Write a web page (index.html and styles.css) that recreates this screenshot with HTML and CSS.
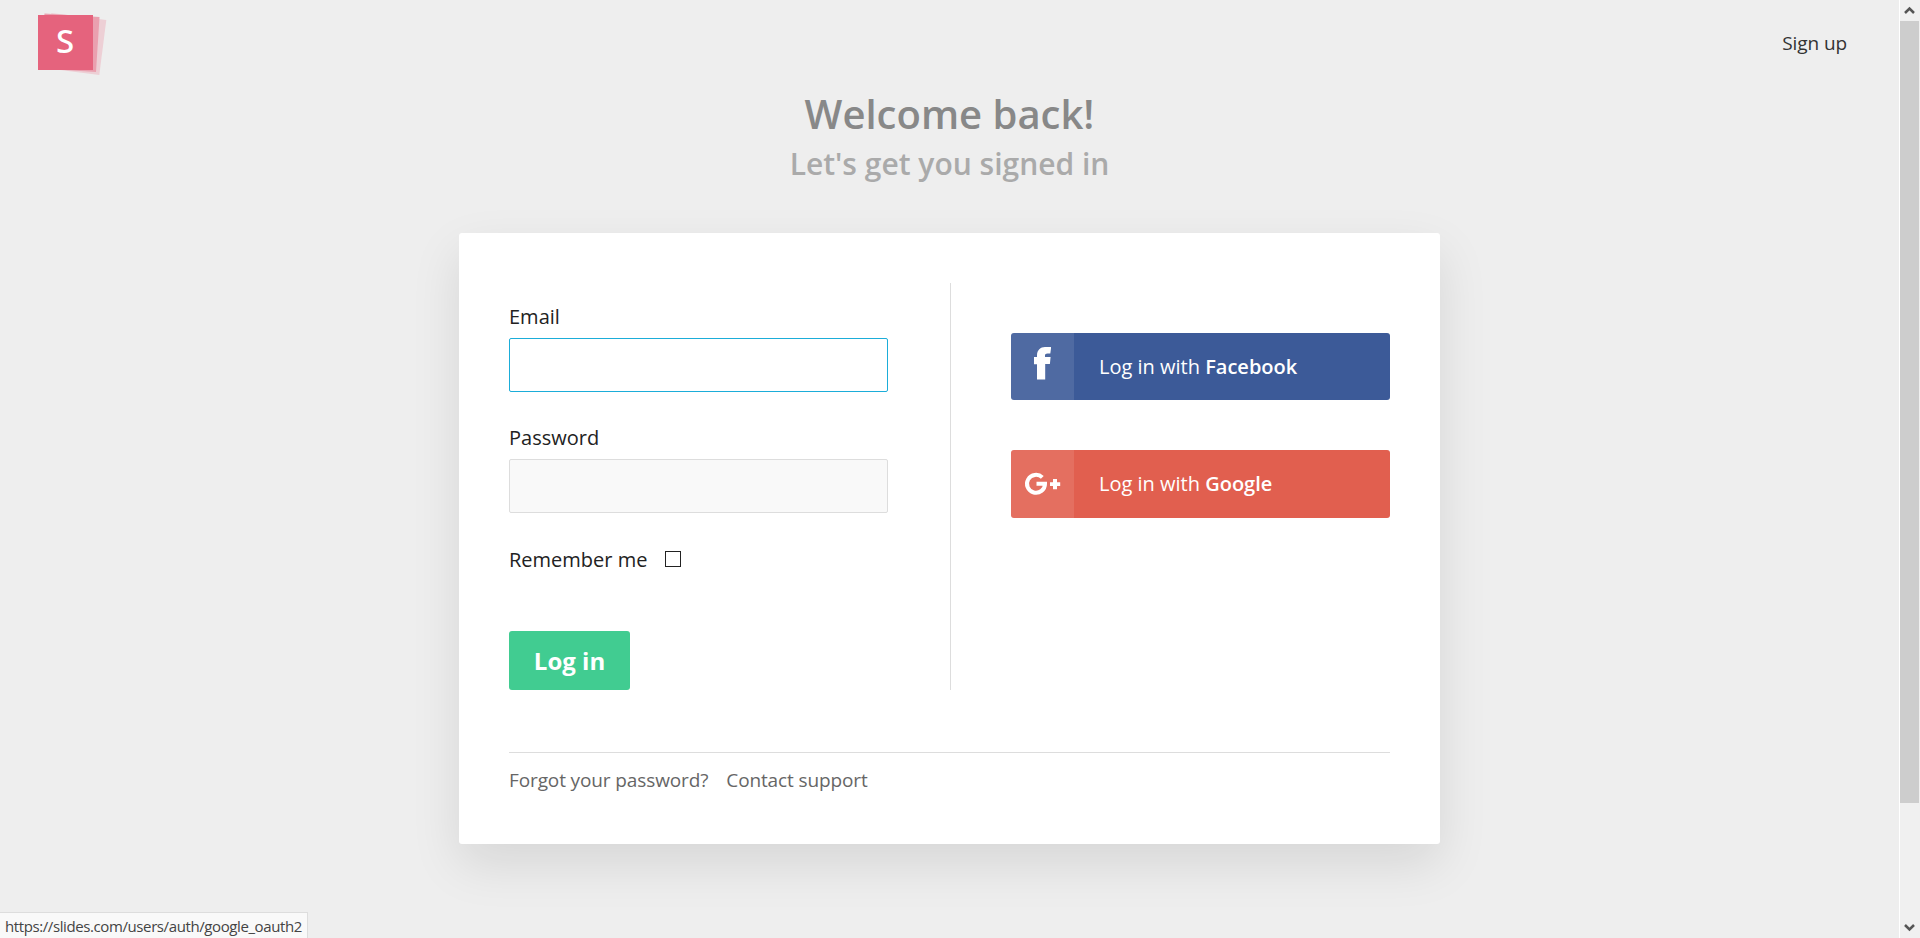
FILE: index.html
```html
<!DOCTYPE html>
<html lang="en">
<head>
<meta charset="utf-8">
<title>Log in</title>
<link rel="stylesheet" href="styles.css">
</head>
<body>
<div class="window">
  <div class="page">
    <header class="topbar">
      <a class="logo">
        <svg width="72" height="64" viewBox="0 0 72 64">
          <polygon class="sheet-back" points="15.4,1.1 70.3,8 63.3,63 8.5,56"/>
          <polygon class="sheet-mid" points="8.5,1.4 63.5,5 60,60 5,56.4"/>
          <rect class="sheet-front" x="2" y="3" width="55" height="55"/>
          <text class="logo-letter" x="29.2" y="41" text-anchor="middle">S</text>
        </svg>
      </a>
      <a class="signup">Sign up</a>
    </header>
    <h1 class="title">Welcome back!</h1>
    <h2 class="subtitle">Let's get you signed in</h2>
    <main class="card">
      <div class="columns">
        <form class="form">
          <label class="label">Email</label>
          <div class="input input-focused"></div>
          <label class="label label-next">Password</label>
          <div class="input"></div>
          <div class="remember"><span>Remember me</span><span class="checkbox"></span></div>
          <div class="submit">Log in</div>
        </form>
        <section class="social">
          <a class="provider facebook">
            <span class="provider-icon"><svg width="63" height="67" viewBox="0 0 63 67"><path fill="#fff" d="M26 46.4V31.2h-3V24h3v-1.5C26 17 29.500 14 34 14h6v1.500l-.7 5H36.500c-1.800 0-2.500.7-2.500 2V24h5.600l-.7 7H34.200v15.400z"/></svg></span>
            <span class="provider-text">Log in with <b>Facebook</b></span>
          </a>
          <a class="provider google">
            <span class="provider-icon"><svg width="63" height="68" viewBox="0 0 63 68"><path fill="none" stroke="#fff" stroke-width="4" d="M31.300 27.400A9 9 0 1 0 34 33.800H25.500"/><path fill="#fff" d="M42 29h4v3.200h3.200V36H46v3.300h-4V36h-3v-3.800h3z"/></svg></span>
            <span class="provider-text">Log in with <b>Google</b></span>
          </a>
        </section>
      </div>
      <footer class="links"><a>Forgot your password?</a><a>Contact support</a></footer>
    </main>
    <div class="status">https://slides.com/users/auth/google_oauth2</div>
  </div>
  <div class="scrollbar">
    <svg width="19" height="21" viewBox="0 0 19 21"><path class="arrow" d="M5 13l4.500-4.500L14 13"/></svg>
    <div class="thumb"></div>
    <svg class="down" width="19" height="21" viewBox="0 0 19 21"><path class="arrow" d="M5 8l4.500 4.500L14 8"/></svg>
  </div>
</div>
</body>
</html>
```
FILE: styles.css
```css
* { box-sizing: border-box; }
body {
  margin: 0;
  background: #eee;
  color: #222;
  font: 20px/24px "Open Sans", sans-serif;
  overflow: hidden;
}
.window { display: flex; height: 938px; }
.page { position: relative; flex: 1; }
.topbar {
  display: flex;
  justify-content: space-between;
  height: 92px;
  padding: 12px 52px 0 36px;
}
.logo svg { display: block; }
.sheet-back { fill: #edcfd5; }
.sheet-mid { fill: #eaa0af; }
.sheet-front { fill: #e5637d; }
.logo-letter { font: 500 33px "Noto Sans", sans-serif; fill: #fff; }
.signup { padding-top: 19px; font-size: 19px; letter-spacing: -0.1px; color: #333; }
.title, .subtitle { margin: 0; text-align: center; font-weight: 600; }
.title { font-size: 40px; line-height: 44px; color: #888; }
.subtitle { margin-top: 10px; font-size: 30px; line-height: 36px; color: #aaa; }
.card {
  width: 981px;
  height: 611px;
  margin: 51px auto 0;
  padding: 50px;
  background: #fff;
  border-radius: 3px;
  box-shadow: 0 20px 50px rgba(0, 0, 0, 0.1);
}
.columns { display: flex; height: 407px; }
.form { width: 441px; padding: 22px 62px 0 0; }
.label { display: block; margin-bottom: 9px; }
.label-next { margin-top: 34px; }
.input {
  height: 54px;
  border: 1px solid #ddd;
  border-radius: 2px;
  background: #f9f9f9;
}
.input-focused { border-color: #1badd9; background: #fff; }
.remember { display: flex; align-items: flex-start; gap: 18px; margin-top: 35px; }
.checkbox { width: 16px; height: 16px; margin-top: 3px; border: 1px solid #222; background: #fff; }
.submit {
  width: 121px;
  height: 59px;
  margin-top: 59px;
  border-radius: 3px;
  background: #41cc91;
  color: #fff;
  font-size: 24px;
  font-weight: 700;
  line-height: 59px;
  text-align: center;
}
.social {
  display: flex;
  flex: 1;
  flex-direction: column;
  gap: 50px;
  padding: 50px 0 0 60px;
  border-left: 1px solid #ddd;
}
.provider { display: flex; border-radius: 3px; overflow: hidden; color: #fff; }
.facebook { height: 67px; background: #3c5a98; }
.google { height: 68px; background: #e15f4f; }
.provider-icon { width: 63px; background: rgba(255, 255, 255, 0.1); }
.provider-icon svg { display: block; }
.provider-text { padding-left: 25px; line-height: 67px; }
.provider-text b { font-weight: 600; }
.links {
  display: flex;
  gap: 18px;
  margin-top: 62px;
  padding-top: 15px;
  border-top: 1px solid #ddd;
  color: #666;
  font-size: 19px;
  letter-spacing: -0.12px;
}
.status {
  position: absolute;
  left: 0;
  bottom: 0;
  width: 308px;
  height: 26px;
  padding-left: 5px;
  border: 1px solid #ddd;
  border-width: 1px 1px 0 0;
  background: #f9f9f9;
  color: #444;
  font-size: 15px;
  letter-spacing: -0.4px;
  line-height: 27px;
  white-space: nowrap;
}
.scrollbar {
  display: flex;
  flex-direction: column;
  width: 21px;
  padding-right: 1px;
  border-left: 1px solid #fff;
  background: #f0f0f0;
}
.thumb { height: 782px; background: #cdcdcd; }
.down { margin-top: auto; }
.arrow { fill: none; stroke: #555; stroke-width: 2.500; }
```
